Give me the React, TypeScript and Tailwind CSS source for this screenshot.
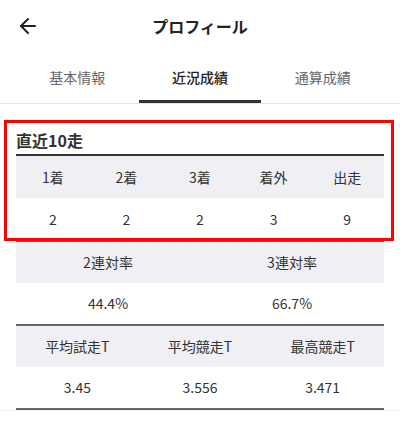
import React from "react";
import { ArrowLeft } from "lucide-react";

const font = { fontFamily: '"Noto Sans CJK JP", "Noto Sans", sans-serif' };

function Table({ heads, values, cols, rowH }: { heads: string[]; values: string[]; cols: string; rowH: string }) {
  return (
    <div className="border-b-2 border-[#666]">
      <div className={`grid ${cols} bg-[#efeff4] ${rowH}`}>
        {heads.map((h) => (
          <div key={h} className="flex items-center justify-center text-[14px] text-[#333]">{h}</div>
        ))}
      </div>
      <div className={`grid ${cols} bg-white ${rowH}`}>
        {values.map((v, i) => (
          <div key={i} className="flex items-center justify-center text-[14px] text-[#333]">{v}</div>
        ))}
      </div>
    </div>
  );
}

export default function App() {
  return (
    <div className="relative w-[400px] h-[436px] bg-white overflow-hidden" style={font}>
      <div className="h-[52px] flex items-center justify-center relative">
        <div className="absolute left-[16px] top-[14px] text-[#222]">
          <ArrowLeft size={24} strokeWidth={2} />
        </div>
        <div className="text-[16px] font-bold text-[#222]">プロフィール</div>
      </div>
      <div className="border-b border-[#e6e6e6]">
        <div className="flex px-4 h-[51px]">
          <div className="flex-1 flex items-center justify-center pt-[3px] border-b-[3px] border-transparent text-[14px] text-[#666]">基本情報</div>
          <div className="flex-1 flex items-center justify-center pt-[3px] border-b-[3px] border-[#333] text-[14px] text-[#222] font-medium">近況成績</div>
          <div className="flex-1 flex items-center justify-center pt-[3px] border-b-[3px] border-transparent text-[14px] text-[#666]">通算成績</div>
        </div>
      </div>
      <div className="px-4 pt-[24px] border-b border-[#f0f0f0]">
        <div className="h-[28px] border-b-2 border-[#333] flex items-start">
          <div className="text-[16px] leading-[24px] font-bold text-[#333]">直近10走</div>
        </div>
        <Table heads={["1着", "2着", "3着", "着外", "出走"]} values={["2", "2", "2", "3", "9"]} cols="grid-cols-5" rowH="h-[42px]" />
        <Table heads={["2連対率", "3連対率"]} values={["44.4%", "66.7%"]} cols="grid-cols-2" rowH="h-[41px]" />
        <Table heads={["平均試走T", "平均競走T", "最高競走T"]} values={["3.45", "3.556", "3.471"]} cols="grid-cols-3" rowH="h-[41px]" />
      </div>
      <div className="absolute left-[4px] top-[120px] w-[390px] h-[121px] border-[3px] border-[#ff0000] pointer-events-none" />
    </div>
  );
}
